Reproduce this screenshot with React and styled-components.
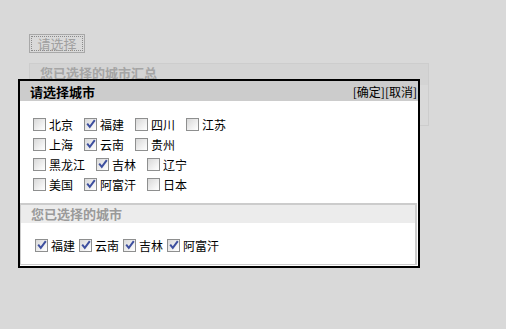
import React from "react";
import styled, { createGlobalStyle } from "styled-components";

const GlobalStyle = createGlobalStyle`
  html, body {
    margin: 0;
    padding: 0;
    background: #d9d9d9;
    font-family: "Noto Sans CJK SC", "Noto Sans", sans-serif;
    font-size: 12px;
  }
`;

const Page = styled.div`
  position: relative;
  width: 506px;
  height: 329px;
  padding: 34px 0 0 29px;
  box-sizing: border-box;
`;

const PickButton = styled.div`
  width: 56px;
  height: 19px;
  border: 1px solid #a8a8a8;
  box-sizing: border-box;
  padding: 1px;
`;

const PickInner = styled.div`
  height: 100%;
  border: 1px dotted #8a8a8a;
  box-sizing: border-box;
  display: flex;
  align-items: center;
  justify-content: center;
  color: #a0a0a0;
  font-size: 13px;
  line-height: 1;
`;

const Summary = styled.div`
  margin-top: 10px;
  width: 400px;
  height: 63px;
  border: 1px solid #cdcdcd;
  box-sizing: border-box;
`;

const SummaryHead = styled.div`
  height: 21px;
  background: #d4d4d4;
  padding-left: 10px;
  font-weight: bold;
  font-size: 13px;
  line-height: 18px;
  color: #a5a5a5;
`;

const Dialog = styled.div`
  position: absolute;
  left: 18px;
  top: 79px;
  width: 402px;
  border: 2px solid #000;
  background: #fff;
  box-sizing: border-box;
`;

const DialogHead = styled.div`
  height: 20px;
  background: #cccccc;
  display: flex;
  align-items: center;
  justify-content: space-between;
  padding: 0 1px 0 10px;
`;

const DialogTitle = styled.div`
  font-weight: bold;
  font-size: 13px;
  color: #000;
`;

const Actions = styled.div`
  display: flex;
  color: #000;
  font-size: 12px;
`;

const Action = styled.span`
  cursor: pointer;
`;

const Body = styled.div`
  padding: 13px 13px 9px;
`;

const Row = styled.div`
  display: flex;
  align-items: center;
  height: 20px;
`;

const Item = styled.label`
  display: flex;
  align-items: center;
  margin-right: ${(p) => p.$gap}px;
  color: #000;
  white-space: nowrap;
`;

const Box = styled.span`
  width: 13px;
  height: 13px;
  box-sizing: border-box;
  border: 1px solid #8e8f8f;
  background: linear-gradient(135deg, #d8d8d8 0%, #f4f4f4 70%, #ffffff 100%);
  margin-right: 3px;
  display: flex;
  align-items: center;
  justify-content: center;
  flex-shrink: 0;
`;

const Selected = styled.div`
  margin-right: 1px;
  margin-bottom: 1px;
  border: 1px solid #cccccc;
  border-top-width: 2px;
  border-right-width: 2px;
`;

const SelectedHead = styled.div`
  height: 18px;
  background: #ececec;
  padding-left: 10px;
  font-weight: bold;
  font-size: 13px;
  line-height: 18px;
  color: #9a9a9a;
`;

const SelectedBody = styled.div`
  padding: 12px 14px 9px;
`;

const Check = () => (
  <svg width="10" height="10" viewBox="0 0 10 10">
    <path d="M1.2 4.6 L3.8 7.8 L8.8 1.2" fill="none" stroke="#3d4f9f" strokeWidth="2" />
  </svg>
);

const CheckItem = ({ name, checked, gap }) => (
  <Item $gap={gap}>
    <Box>{checked && <Check />}</Box>
    {name}
  </Item>
);

const rows = [
  [["北京", false], ["福建", true], ["四川", false], ["江苏", false]],
  [["上海", false], ["云南", true], ["贵州", false]],
  [["黑龙江", false], ["吉林", true], ["辽宁", false]],
  [["美国", false], ["阿富汗", true], ["日本", false]],
];

const App = () => {
  const picked = rows.flat().filter((c) => c[1]).map((c) => c[0]);
  return (
    <>
      <GlobalStyle />
      <Page>
        <PickButton>
          <PickInner>请选择</PickInner>
        </PickButton>
        <Summary>
          <SummaryHead>您已选择的城市汇总</SummaryHead>
        </Summary>

        <Dialog>
          <DialogHead>
            <DialogTitle>请选择城市</DialogTitle>
            <Actions>
              <Action>[确定]</Action>
              <Action>[取消]</Action>
            </Actions>
          </DialogHead>
          <Body>
            {rows.map((row, i) => (
              <Row key={i}>
                {row.map(([name, checked]) => (
                  <CheckItem key={name} name={name} checked={checked} gap={11} />
                ))}
              </Row>
            ))}
          </Body>
          <Selected>
            <SelectedHead>您已选择的城市</SelectedHead>
            <SelectedBody>
              <Row>
                {picked.map((name) => (
                  <CheckItem key={name} name={name} checked gap={4} />
                ))}
              </Row>
            </SelectedBody>
          </Selected>
        </Dialog>
      </Page>
    </>
  );
};

export default App;
